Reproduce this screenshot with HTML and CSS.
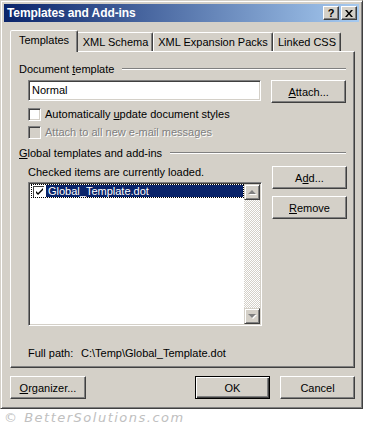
FILE: index.html
```html
<!DOCTYPE html>
<html lang="en">
<head>
    <meta charset="UTF-8">
    <title>Templates and Add-ins</title>
    <link rel="stylesheet" href="styles.css">
</head>
<body>

    <div class="window">
        <div class="titlebar">
            <span class="title">Templates and Add-ins</span>
            <div class="caption-btns">
                <span class="caption-btn">?</span>
                <span class="caption-btn close">
                    <svg width="8" height="7" viewBox="0 0 8 7"><path d="M0 0h2l2 2.5L6 0h2L5 3.5 8 7H6L4 4.5 2 7H0l3-3.5z" fill="#000"/></svg>
                </span>
            </div>
        </div>

        <div class="client">
            <div class="tabs">
                <div class="tab active" style="width: 68px">Templates</div>
                <div class="tab" style="width: 77px">XML Schema</div>
                <div class="tab" style="width: 120px">XML Expansion Packs</div>
                <div class="tab" style="width: 68px">Linked CSS</div>
            </div>

            <div class="panel">
                <div class="group-header"><span>Document <u>t</u>emplate</span></div>
                <div class="field-row">
                    <div class="textbox">Normal</div>
                    <button class="btn"><u>A</u>ttach...</button>
                </div>
                <div class="check-row">
                    <span class="checkbox"></span>
                    <span>Automatically <u>u</u>pdate document styles</span>
                </div>
                <div class="check-row disabled">
                    <span class="checkbox"></span>
                    <span>Attach to all new e-mail messages</span>
                </div>

                <div class="group-header global"><span><u>G</u>lobal templates and add-ins</span></div>
                <div class="addins">
                    <div class="addins-left">
                        <div class="hint">Checked items are currently loaded.</div>
                        <div class="listbox">
                            <div class="list-items">
                                <div class="list-item">
                                    <span class="list-check">
                                        <svg width="9" height="9" viewBox="0 0 9 9"><path d="M1 4l2 2 5-5v2L3 8 1 6z" fill="#000"/></svg>
                                    </span>
                                    <span class="list-text">Global_Template.dot</span>
                                </div>
                            </div>
                            <div class="scrollbar">
                                <span class="scroll-btn"><span class="arrow up"></span></span>
                                <span class="scroll-track"></span>
                                <span class="scroll-btn"><span class="arrow down"></span></span>
                            </div>
                        </div>
                    </div>
                    <div class="addins-right">
                        <button class="btn">A<u>d</u>d...</button>
                        <button class="btn"><u>R</u>emove</button>
                    </div>
                </div>

                <div class="full-path">
                    <span class="path-label">Full path:</span>
                    <span>C:\Temp\Global_Template.dot</span>
                </div>
            </div>

            <div class="footer">
                <button class="btn organizer"><u>O</u>rganizer...</button>
                <div class="spacer"></div>
                <button class="btn default">OK</button>
                <button class="btn">Cancel</button>
            </div>
        </div>
    </div>

    <div class="watermark">&copy; BetterSolutions.com</div>

</body>
</html>
```

FILE: styles.css
```css
body {
    margin: 0;
    background-color: #ffffff;
    font-family: "Liberation Sans", Arial, sans-serif;
    font-size: 11px;
    color: #000;
}

u {
    text-decoration: underline;
    text-underline-offset: 1px;
}

.window {
    width: 363px;
    box-sizing: border-box;
    background-color: #d4d0c8;
    border: 1px solid;
    border-color: #d4d0c8 #404040 #404040 #d4d0c8;
    box-shadow: inset 1px 1px #ffffff, inset -1px -1px #808080;
    padding: 3px;
}

.titlebar {
    height: 18px;
    display: flex;
    align-items: center;
    justify-content: space-between;
    padding: 0 2px 0 3px;
    background: linear-gradient(to right, #0a246a, #a6caf0);
}

.title {
    color: #ffffff;
    font-weight: bold;
    font-size: 12px;
    letter-spacing: -0.1px;
}

.caption-btns {
    display: flex;
    gap: 2px;
}

.caption-btn {
    width: 16px;
    height: 14px;
    box-sizing: border-box;
    display: flex;
    align-items: center;
    justify-content: center;
    background-color: #d4d0c8;
    border: 1px solid;
    border-color: #ffffff #404040 #404040 #ffffff;
    box-shadow: inset -1px -1px #808080;
    font-weight: bold;
    font-size: 11px;
    line-height: 1;
}

.client {
    padding: 8px 4px 6px 6px;
}

/* tab strip */
.tabs {
    display: flex;
    align-items: flex-end;
    height: 21px;
}

.tab {
    height: 19px;
    box-sizing: border-box;
    display: flex;
    align-items: center;
    justify-content: center;
    border: 1px solid;
    border-bottom: none;
    border-color: #ffffff #404040 transparent #ffffff;
    border-radius: 2px 2px 0 0;
    box-shadow: inset -1px 0 #808080;
    padding-bottom: 1px;
    white-space: nowrap;
}

.tab.active {
    height: 22px;
    margin-right: -2px;
    margin-bottom: -1px;
    padding-bottom: 3px;
    background-color: #d4d0c8;
    position: relative;
    z-index: 1;
}

.tab.active + .tab {
    padding-left: 2px;
}

.panel {
    height: 317px;
    box-sizing: border-box;
    border: 1px solid;
    border-color: #ffffff #404040 #404040 #ffffff;
    box-shadow: inset -1px -1px #808080;
    padding: 10px 8px 0 8px;
}

.group-header {
    display: flex;
    align-items: center;
    height: 13px;
}

.group-header::after {
    content: "";
    flex: 1;
    margin-left: 8px;
    border-top: 1px solid #808080;
    border-bottom: 1px solid #ffffff;
}

.group-header.global {
    margin-top: 5px;
}

.field-row {
    display: flex;
    align-items: flex-start;
    gap: 10px;
    margin: 5px 0 0 9px;
}

.textbox {
    width: 234px;
    height: 21px;
    box-sizing: border-box;
    background-color: #ffffff;
    border: 1px solid;
    border-color: #808080 #ffffff #ffffff #808080;
    box-shadow: inset 1px 1px #404040, inset -1px -1px #d4d0c8;
    padding: 3px 3px;
    line-height: 13px;
}

.btn {
    width: 75px;
    height: 23px;
    box-sizing: border-box;
    background-color: #d4d0c8;
    border: 1px solid;
    border-color: #ffffff #404040 #404040 #ffffff;
    box-shadow: inset -1px -1px #808080;
    font-family: inherit;
    font-size: 11px;
    color: #000;
    padding: 0;
}

.btn.default {
    border: 1px solid #000;
    box-shadow: inset 1px 1px #ffffff, inset -1px -1px #404040, inset -2px -2px #808080;
}

.check-row {
    display: flex;
    align-items: center;
    gap: 4px;
    height: 18px;
    margin-left: 9px;
}

.field-row + .check-row {
    margin-top: 2px;
}

.checkbox {
    width: 13px;
    height: 13px;
    box-sizing: border-box;
    background-color: #ffffff;
    border: 1px solid;
    border-color: #808080 #ffffff #ffffff #808080;
    box-shadow: inset 1px 1px #404040, inset -1px -1px #d4d0c8;
}

.check-row.disabled {
    color: #808080;
    text-shadow: 1px 1px 0 #ffffff;
}

.check-row.disabled .checkbox {
    background-color: #d4d0c8;
}

.addins {
    display: flex;
    gap: 10px;
    margin: 7px 0 0 9px;
}

.hint {
    height: 13px;
    line-height: 13px;
}

.listbox {
    width: 234px;
    height: 144px;
    box-sizing: border-box;
    margin-top: 3px;
    display: flex;
    background-color: #ffffff;
    border: 1px solid;
    border-color: #808080 #ffffff #ffffff #808080;
    box-shadow: inset 1px 1px #404040, inset -1px -1px #d4d0c8;
    padding: 1px;
}

.list-items {
    flex: 1;
    padding-left: 1px;
}

.list-item {
    display: flex;
    align-items: center;
    height: 14px;
    box-sizing: border-box;
    outline: 1px dotted #000;
    outline-offset: -1px;
    padding-left: 2px;
}

.list-check {
    width: 11px;
    height: 11px;
    box-sizing: border-box;
    border-left: 1px solid #404040;
    border-top: 1px solid #404040;
    display: flex;
    align-items: center;
    justify-content: center;
    margin-right: 2px;
}

.list-text {
    flex: 1;
    align-self: stretch;
    background-color: #0a246a;
    color: #ffffff;
    line-height: 12px;
    padding: 0 2px;
    margin: 1px 1px 1px 0;
}

.scrollbar {
    width: 16px;
    display: flex;
    flex-direction: column;
}

.scroll-btn {
    width: 16px;
    height: 16px;
    box-sizing: border-box;
    display: flex;
    align-items: center;
    justify-content: center;
    background-color: #d4d0c8;
    border: 1px solid;
    border-color: #d4d0c8 #404040 #404040 #d4d0c8;
    box-shadow: inset 1px 1px #ffffff, inset -1px -1px #808080;
}

.scroll-track {
    flex: 1;
    background-image: repeating-conic-gradient(#d4d0c8 0 25%, #ffffff 0 50%);
    background-size: 2px 2px;
}

.arrow {
    width: 0;
    height: 0;
    border-left: 4px solid transparent;
    border-right: 4px solid transparent;
}

.arrow.up {
    border-bottom: 4px solid #808080;
    filter: drop-shadow(1px 1px 0 #ffffff);
}

.arrow.down {
    border-top: 4px solid #808080;
    filter: drop-shadow(1px 1px 0 #ffffff);
}

.addins-right {
    display: flex;
    flex-direction: column;
    gap: 7px;
}

.full-path {
    display: flex;
    height: 13px;
    line-height: 13px;
    margin: 21px 0 0 9px;
}

.path-label {
    width: 53px;
}

.footer {
    display: flex;
    gap: 10px;
    margin-top: 8px;
}

.footer .organizer {
    width: 76px;
}

.spacer {
    flex: 1;
}

.watermark {
    margin: 1px 0 0 4px;
    font-family: "DejaVu Sans", sans-serif;
    font-style: italic;
    font-size: 13px;
    letter-spacing: 1.5px;
    color: #c0c0c0;
}
```
